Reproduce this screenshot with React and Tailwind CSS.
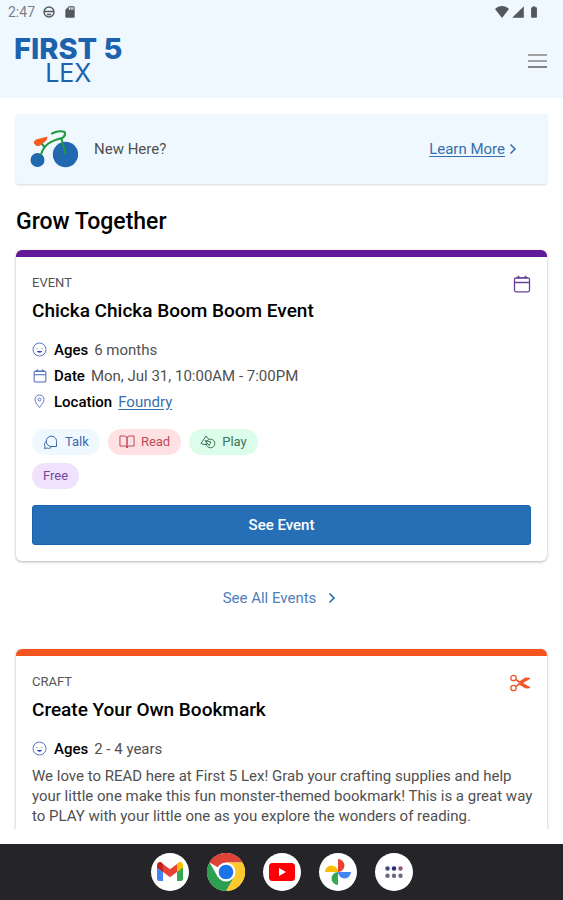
import { FiChevronRight, FiBookOpen } from "react-icons/fi";
import { MdSdCard, MdSignalCellular4Bar, MdBatteryFull } from "react-icons/md";

/* ICONS */
const StatusDot = () => (
  <svg viewBox="0 0 12 12" className="w-3 h-3" fill="none" stroke="currentColor" strokeWidth="1.4">
    <circle cx="6" cy="6" r="5" />
    <path d="M1 5.500h10M4 8.500h4" />
  </svg>
);

const WifiIcon = () => (
  <svg viewBox="0 0 14 12" className="w-3.5 h-3" fill="currentColor">
    <path d="M7 12L0 3C2 1 4.500 0 7 0s5 1 7 3z" />
  </svg>
);

const BikeIcon = () => (
  <svg viewBox="0 0 48 38" className="w-12 h-[38px]" fill="none" strokeLinecap="round">
    <circle cx="7.500" cy="30" r="7" fill="#2068b0" />
    <circle cx="35.500" cy="24.500" r="12.700" fill="#2068b0" />
    <path
      d="M11 24.500C14 15 20 11 32 8M14.500 17L11.500 13.500M22 3.500C26 1.500 31 1 34.500 1.800C36 5 34 7 31.500 8.500L35.500 24"
      stroke="#1d9a3c"
      strokeWidth="2"
      strokeLinejoin="round"
    />
    <path d="M4.500 13C4 10 7 9.500 10 9L17 7.200C16.500 11 14 12.500 11.500 13C10 16.500 5.500 16.500 4.500 13Z" fill="#fb5a1c" stroke="#fb5a1c" />
  </svg>
);

const FaceIcon = () => (
  <svg viewBox="0 0 16 16" className="w-4 h-4 shrink-0" fill="none" stroke="#5b78c0">
    <circle cx="7.500" cy="7.500" r="6.500" />
    <path d="M4.500 6.500h1M9.500 6.500h1" />
    <path d="M5 9h5c-.4 2.200-4.600 2.200-5 0z" fill="#2446b0" stroke="none" />
  </svg>
);

const CalendarIcon = ({ className }) => (
  <svg viewBox="0 0 18 18" className={className} fill="none" stroke="currentColor" strokeWidth="1.300">
    <rect x="1.500" y="2.800" width="15" height="14" rx="1.500" />
    <path d="M1.500 7.500h15M3 2.800h12" />
    <path d="M5.500 .8v3M12.500 .8v3" strokeWidth="1.800" />
  </svg>
);

const PinIcon = () => (
  <svg viewBox="0 0 16 16" className="w-4 h-4 shrink-0" fill="none" stroke="#5b78c0">
    <path d="M7.500 13.500C5.500 10.800 3 8.500 3 5.500a4.500 4.500 0 0 1 9 0c0 3-2.500 5.300-4.500 8z" />
    <circle cx="7.500" cy="5.500" r="1.500" />
  </svg>
);

const TalkIcon = () => (
  <svg viewBox="0 0 16 16" className="w-4 h-4" fill="none" stroke="currentColor" strokeLinejoin="round">
    <path d="M13.500 12.500h-4.500A5.200 5.200 0 1 1 13.500 8.500z" />
    <path d="M3.800 7C1.500 8.500 1 10.500 2 12.500L1.500 14.500l2.500-.5c2 .8 3.800 .3 5-1.500" />
  </svg>
);

const PlayIcon = () => (
  <svg viewBox="0 0 16 16" className="w-4 h-4" fill="none" stroke="currentColor" strokeLinejoin="round">
    <path d="M4 10.500L1 9.500L6 2L8.500 5" />
    <circle cx="10.500" cy="9.500" r="4.300" />
    <path d="M5 6.500l6 1.500l-2 3.500zM4 10.500l2.500 0" />
  </svg>
);

const ScissorsIcon = () => (
  <svg viewBox="0 0 22 18" className="w-[22px] h-[18px] text-[#f2542a]" fill="none" stroke="currentColor" strokeWidth="1.300">
    <circle cx="4.500" cy="4" r="2.700" />
    <circle cx="4.500" cy="14" r="2.700" />
    <path d="M6.800 5.500L20.500 13.500L16.500 13.800L10 9.800M6.800 12.500L20.500 4.500L16.500 4.200L10 8.200" fill="currentColor" strokeLinejoin="round" />
  </svg>
);

const GmailIcon = () => (
  <svg viewBox="0 0 26 20" className="w-[26px] h-5">
    <path d="M0 4v13a2 2 0 0 0 2 2h4V8z" fill="#4285f4" />
    <path d="M26 4v13a2 2 0 0 1-2 2h-4V8z" fill="#34a853" />
    <path d="M20 2v8l6-4.500V3c0-2.500-3-4-5-2.300z" fill="#fbbc04" />
    <path d="M0 3v2.500L6 10V2L5 .7C3-1 0 .5 0 3z" fill="#c5221f" />
    <path d="M6 2l7 5.300L20 2v8l-7 5.300L6 10z" fill="#ea4335" />
  </svg>
);

const ChromeIcon = () => (
  <svg viewBox="0 0 38 38" className="w-full h-full">
    <path d="M19 19L2.500 9.500A19 19 0 0 1 35.500 9.500H19z" fill="#dd4337" />
    <path d="M19 19V9.500H35.500A19 19 0 0 1 19 38L27.200 23.800z" fill="#fdc92f" />
    <path d="M19 19L27.200 23.800L19 38A19 19 0 0 1 2.500 9.500L10.800 23.800z" fill="#2d9f4f" />
    <circle cx="19" cy="19" r="9.500" fill="#fff" />
    <circle cx="19" cy="19" r="7.300" fill="#1a73e8" />
  </svg>
);

const YoutubeIcon = () => (
  <svg viewBox="0 0 26 18" className="w-[26px] h-[18px]">
    <rect width="26" height="18" rx="3.500" fill="#fb0007" />
    <path d="M10 5l7 4-7 4z" fill="#fff" />
  </svg>
);

const PhotosIcon = () => (
  <svg viewBox="0 0 28 28" className="w-7 h-7">
    <path d="M14 1a6.500 6.500 0 0 1 0 13z" fill="#ea4335" />
    <path d="M27 14a6.500 6.500 0 0 1-13 0z" fill="#4285f4" />
    <path d="M14 27a6.500 6.500 0 0 1 0-13z" fill="#34a853" />
    <path d="M1 14a6.500 6.500 0 0 1 13 0z" fill="#fbbc04" />
  </svg>
);

const AppsIcon = () => (
  <svg viewBox="0 0 18 12" className="w-[18px] h-3">
    <circle cx="2.500" cy="2.500" r="2.200" fill="#43497d" />
    <circle cx="9" cy="2.500" r="2.200" fill="#252b78" />
    <circle cx="15.500" cy="2.500" r="2.200" fill="#8d5a77" />
    <circle cx="2.500" cy="9.700" r="2.200" fill="#686a7e" />
    <circle cx="9" cy="9.700" r="2.200" fill="#686a7e" />
    <circle cx="15.500" cy="9.700" r="2.200" fill="#686a7e" />
  </svg>
);

/* DATA */
const tags = [
  { label: "Talk", icon: <TalkIcon />, color: "bg-[#f0f8ff] text-[#3f69a8]" },
  { label: "Read", icon: <FiBookOpen className="w-4 h-4" strokeWidth={1.5} />, color: "bg-[#ffe1e3] text-[#bd4a58]" },
  { label: "Play", icon: <PlayIcon />, color: "bg-[#dcfdea] text-[#3e7558]" },
  { label: "Free", color: "bg-[#f0e1fd] text-[#74479b]" },
];

const apps = [
  { name: "Gmail", icon: <GmailIcon /> },
  { name: "Chrome", icon: <ChromeIcon /> },
  { name: "YouTube", icon: <YoutubeIcon /> },
  { name: "Photos", icon: <PhotosIcon /> },
  { name: "All apps", icon: <AppsIcon /> },
];

const InfoRow = ({ icon, label, children }) => (
  <div className="flex items-center">
    {icon}
    <span className="mx-[6px] font-medium text-black">{label}</span>
    {children}
  </div>
);

const Card = ({ type, title, icon, accent, children }) => (
  <article className={`rounded-md border-t-[7px] bg-white px-4 shadow-[0_1px_3px_rgba(0,0,0,0.3)] ${accent}`}>
    <div className="flex h-9 items-end justify-between">
      <p className="text-[13px] leading-5 text-[#555]">{type}</p>
      {icon}
    </div>
    <h3 className="mt-1 text-[19px] leading-7 font-medium text-black">{title}</h3>
    {children}
  </article>
);

const App = () => {
  return (
    <div className="flex h-screen flex-col bg-white font-[Roboto,sans-serif] text-[15px] leading-[26px] text-[#505050]">
      {/* HEADER */}
      <header className="shrink-0 bg-[#f0f8ff]">
        <div className="flex h-6 items-center justify-between px-2 text-[#55585b]">
          <div className="flex items-center gap-2">
            <span className="text-sm leading-6 text-[#7b7f83]">2:47</span>
            <StatusDot />
            <MdSdCard className="w-3.5 h-3.5" />
          </div>
          <div className="flex items-center gap-[2px] pr-3.5">
            <WifiIcon />
            <MdSignalCellular4Bar className="w-3.5 h-3.5" />
            <MdBatteryFull className="w-3.5 h-3.5" />
          </div>
        </div>
        <div className="flex h-[74px] items-center justify-between pr-4 pl-[14px]">
          <a href="#home" className="flex flex-col items-center font-[Inter,sans-serif] text-[#1c62ac]">
            <span className="text-[29px] leading-[25px] font-extrabold">FIRST 5</span>
            <span className="text-[25px] leading-[25px]">LEX</span>
          </a>
          <button aria-label="Menu" className="flex w-[19px] flex-col gap-1">
            <span className="h-[2px] w-full bg-[#a0a2a4]" />
            <span className="h-[2px] w-full bg-[#a0a2a4]" />
            <span className="h-[2px] w-full bg-[#808284]" />
          </button>
        </div>
      </header>

      {/* CONTENT */}
      <main className="min-h-0 flex-1 overflow-hidden px-4 pt-4 mb-[15px]">
        <section className="flex h-[70px] items-center rounded-xs bg-[#f0f8ff] px-[14px] shadow-[0_1px_2px_rgba(0,0,0,0.15)]">
          <BikeIcon />
          <span className="ml-4 flex-1">New Here?</span>
          <a href="#learn" className="mr-3 flex items-center text-[#376faf]">
            <span className="underline underline-offset-2">Learn More</span>
            <FiChevronRight className="w-4 h-4" strokeWidth={2.5} />
          </a>
        </section>

        <h2 className="mt-6 mb-[14px] text-[23px] leading-7 font-medium text-black">Grow Together</h2>

        <Card
          type="EVENT"
          title="Chicka Chicka Boom Boom Event"
          accent="border-[#611a98]"
          icon={<CalendarIcon className="w-[18px] h-[18px] text-[#69409a]" />}
        >
          <div className="mt-3">
            <InfoRow icon={<FaceIcon />} label="Ages">6 months</InfoRow>
            <InfoRow icon={<CalendarIcon className="w-4 h-4 shrink-0 p-px text-[#4468bd]" />} label="Date">
              Mon, Jul 31, 10:00AM - 7:00PM
            </InfoRow>
            <InfoRow icon={<PinIcon />} label="Location">
              <a href="#foundry" className="text-[#376faf] underline underline-offset-2">Foundry</a>
            </InfoRow>
          </div>
          <ul className="mt-[14px] flex max-w-60 flex-wrap gap-2">
            {tags.map((tag) => (
              <li
                key={tag.label}
                className={`flex items-center gap-[6px] rounded-full px-[11px] text-[13px] leading-[26px] ${tag.color}`}
              >
                {tag.icon}
                {tag.label}
              </li>
            ))}
          </ul>
          <div className="py-4">
            <button className="h-10 w-full rounded-[3px] border border-[#1863ae] bg-[#266fb7] font-medium text-white">
              See Event
            </button>
          </div>
        </Card>

        <a href="#events" className="mt-6 mb-[38px] flex items-center justify-center gap-2 text-[#4f7ebc]">
          See All Events
          <FiChevronRight className="w-4 h-4 text-[#2068b0]" strokeWidth={2.5} />
        </a>

        <Card type="CRAFT" title="Create Your Own Bookmark" accent="border-[#f4551e]" icon={<ScissorsIcon />}>
          <div className="mt-3">
            <InfoRow icon={<FaceIcon />} label="Ages">2 - 4 years</InfoRow>
          </div>
          <p className="mt-1 -mr-2 pb-4 leading-5">
            We love to READ here at First 5 Lex! Grab your crafting supplies and help your little one make this fun
            monster-themed bookmark! This is a great way to PLAY with your little one as you explore the wonders of
            reading.
          </p>
        </Card>
      </main>

      {/* DOCK */}
      <nav className="flex h-14 shrink-0 items-center justify-center gap-[18px] bg-[#252428]">
        {apps.map((app) => (
          <button
            key={app.name}
            aria-label={app.name}
            className="flex h-[38px] w-[38px] items-center justify-center rounded-full bg-white"
          >
            {app.icon}
          </button>
        ))}
      </nav>
    </div>
  );
};

export default App;
